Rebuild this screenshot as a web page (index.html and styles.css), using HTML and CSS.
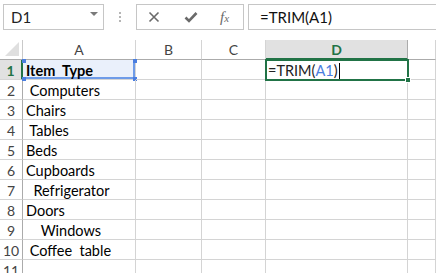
FILE: index.html
```html
<!DOCTYPE html>
<html>
<head>
<meta charset="utf-8">
<link rel="stylesheet" href="styles.css">
</head>
<body>
<div class="toolbar">
  <div class="namebox">
    <span class="nametext">D1</span>
    <svg class="caret" width="8" height="5" viewBox="0 0 8 5"><path d="M0 0H8L4 4Z" fill="#7a7a7a"/></svg>
  </div>
  <div class="dots"><i></i><i></i><i></i></div>
  <div class="btns">
    <svg class="ico" width="12" height="12" viewBox="0 0 12 12"><path d="M1.5 1.5L10.5 10.5M10.5 1.5L1.5 10.5" stroke="#6a6a6a" stroke-width="1.6" fill="none"/></svg>
    <svg class="ico" width="14" height="12" viewBox="0 0 14 12"><path d="M1.5 6.5L5 10L12.5 2" stroke="#6a6a6a" stroke-width="2.6" fill="none"/></svg>
    <span class="fx"><span class="fxf">f</span><span class="fxx">x</span></span>
  </div>
  <div class="formula">=TRIM(A1)</div>
</div>
<div class="sheet">
  <div class="corner"><svg width="14" height="14" viewBox="0 0 14 14"><path d="M14 0V14H0Z" fill="#dfdfdf"/></svg></div>
  <div class="ch">A</div><div class="ch">B</div><div class="ch">C</div><div class="ch sel">D</div><div class="ch"></div>

  <div class="rh sel">1</div><div class="c a1"><b>Item  Type</b><i class="h tl"></i><i class="h tr"></i><i class="h bl"></i><i class="h br"></i></div><div class="c"></div><div class="c"></div><div class="c d1">=TRIM(<span class="ref">A1</span>)<span class="cursor"></span><i class="fill"></i></div><div class="c"></div>

  <div class="rh">2</div><div class="c"> Computers</div><div class="c"></div><div class="c"></div><div class="c"></div><div class="c"></div>
  <div class="rh">3</div><div class="c">Chairs</div><div class="c"></div><div class="c"></div><div class="c"></div><div class="c"></div>
  <div class="rh">4</div><div class="c"> Tables</div><div class="c"></div><div class="c"></div><div class="c"></div><div class="c"></div>
  <div class="rh">5</div><div class="c">Beds</div><div class="c"></div><div class="c"></div><div class="c"></div><div class="c"></div>
  <div class="rh">6</div><div class="c">Cupboards</div><div class="c"></div><div class="c"></div><div class="c"></div><div class="c"></div>
  <div class="rh">7</div><div class="c">  Refrigerator</div><div class="c"></div><div class="c"></div><div class="c"></div><div class="c"></div>
  <div class="rh">8</div><div class="c">Doors</div><div class="c"></div><div class="c"></div><div class="c"></div><div class="c"></div>
  <div class="rh">9</div><div class="c">    Windows</div><div class="c"></div><div class="c"></div><div class="c"></div><div class="c"></div>
  <div class="rh">10</div><div class="c"> Coffee  table</div><div class="c"></div><div class="c"></div><div class="c"></div><div class="c"></div>
  <div class="rh">11</div><div class="c"></div><div class="c"></div><div class="c"></div><div class="c"></div><div class="c"></div>
</div>
</body>
</html>
```
FILE: styles.css
```css
* { box-sizing: border-box; }
html, body { margin: 0; padding: 0; background: #fff; overflow: hidden; }
body { width: 436px; height: 273px; font-family: Lato, "Open Sans", sans-serif; color: #000; }

.toolbar { height: 40px; display: flex; align-items: flex-start; padding-top: 4px; }
.namebox { margin-left: 3px; width: 101px; height: 26px; border: 1px solid #c6c6c6; display: flex; align-items: center; justify-content: space-between; padding: 0 5px 1px 7px; }
.nametext { font-size: 15px; color: #222; }
.caret { margin-bottom: 4px; }
.dots { width: 32px; height: 26px; display: flex; flex-direction: column; align-items: center; justify-content: center; gap: 2px; }
.dots i { width: 2px; height: 2px; background: #b5b5b5; display: block; }
.btns { width: 108px; height: 26px; border: 1px solid #c6c6c6; display: flex; align-items: center; padding-left: 11px; }
.btns .ico { margin-right: 24px; }
.btns .ico + .ico { margin-right: 22px; }
.fx { font-family: "Liberation Serif", serif; font-style: italic; color: #6a6a6a; font-size: 15px; }
.fxx { font-size: 11px; }
.formula { margin-left: 4px; flex: 1; height: 26px; border: 1px solid #c6c6c6; border-right: none; padding-left: 11px; font-size: 15px; line-height: 24px; color: #111; }

.sheet { display: grid; grid-template-columns: 23px 113px 66px 64px 142px 1fr; grid-template-rows: 20px repeat(11, 20px); }
.corner { border-right: 1px solid #c9c9c9; border-bottom: 1px solid #ababab; display: flex; align-items: flex-end; justify-content: flex-end; padding: 0 3px 3px 0; }
.ch { border-right: 1px solid #d4d4d4; border-bottom: 1px solid #ababab; font-size: 14px; color: #444; text-align: center; line-height: 19px; }
.ch.sel { background: #e1e1e1; color: #217346; font-weight: bold; border-bottom: 2px solid #217346; border-right-color: #ababab; }
.rh { border-right: 1px solid #ababab; border-bottom: 1px solid #d4d4d4; font-size: 14px; color: #444; text-align: center; line-height: 20px; padding-top: 1px; }
.rh.sel { background: #e1e1e1; color: #217346; font-weight: bold; border-right: 2px solid #217346; }
.c { position: relative; border-right: 1px solid #d4d4d4; border-bottom: 1px solid #d4d4d4; font-size: 14.5px; white-space: pre; line-height: 20px; padding-left: 3px; padding-top: 1px; overflow: visible; }

.a1 { background: #eaf0fb; box-shadow: inset -2px -2px 0 #6e9be8; }
.h { position: absolute; width: 4px; height: 4px; background: #4a7ee0; }
.tl { left: -1px; top: -1px; }
.tr { right: -2px; top: -1px; }
.bl { left: -1px; bottom: -2px; }
.br { right: -2px; bottom: -2px; }

.d1 { outline: 2px solid #217346; outline-offset: -1px; z-index: 2; padding-left: 2px; color: #222; }
.ref { color: #4a7ee0; }
.cursor { display: inline-block; width: 1px; height: 16px; background: #000; vertical-align: -3px; margin-left: 1px; }
.fill { position: absolute; right: -4px; bottom: -4px; width: 6px; height: 6px; background: #217346; border: 1px solid #fff; }
```
